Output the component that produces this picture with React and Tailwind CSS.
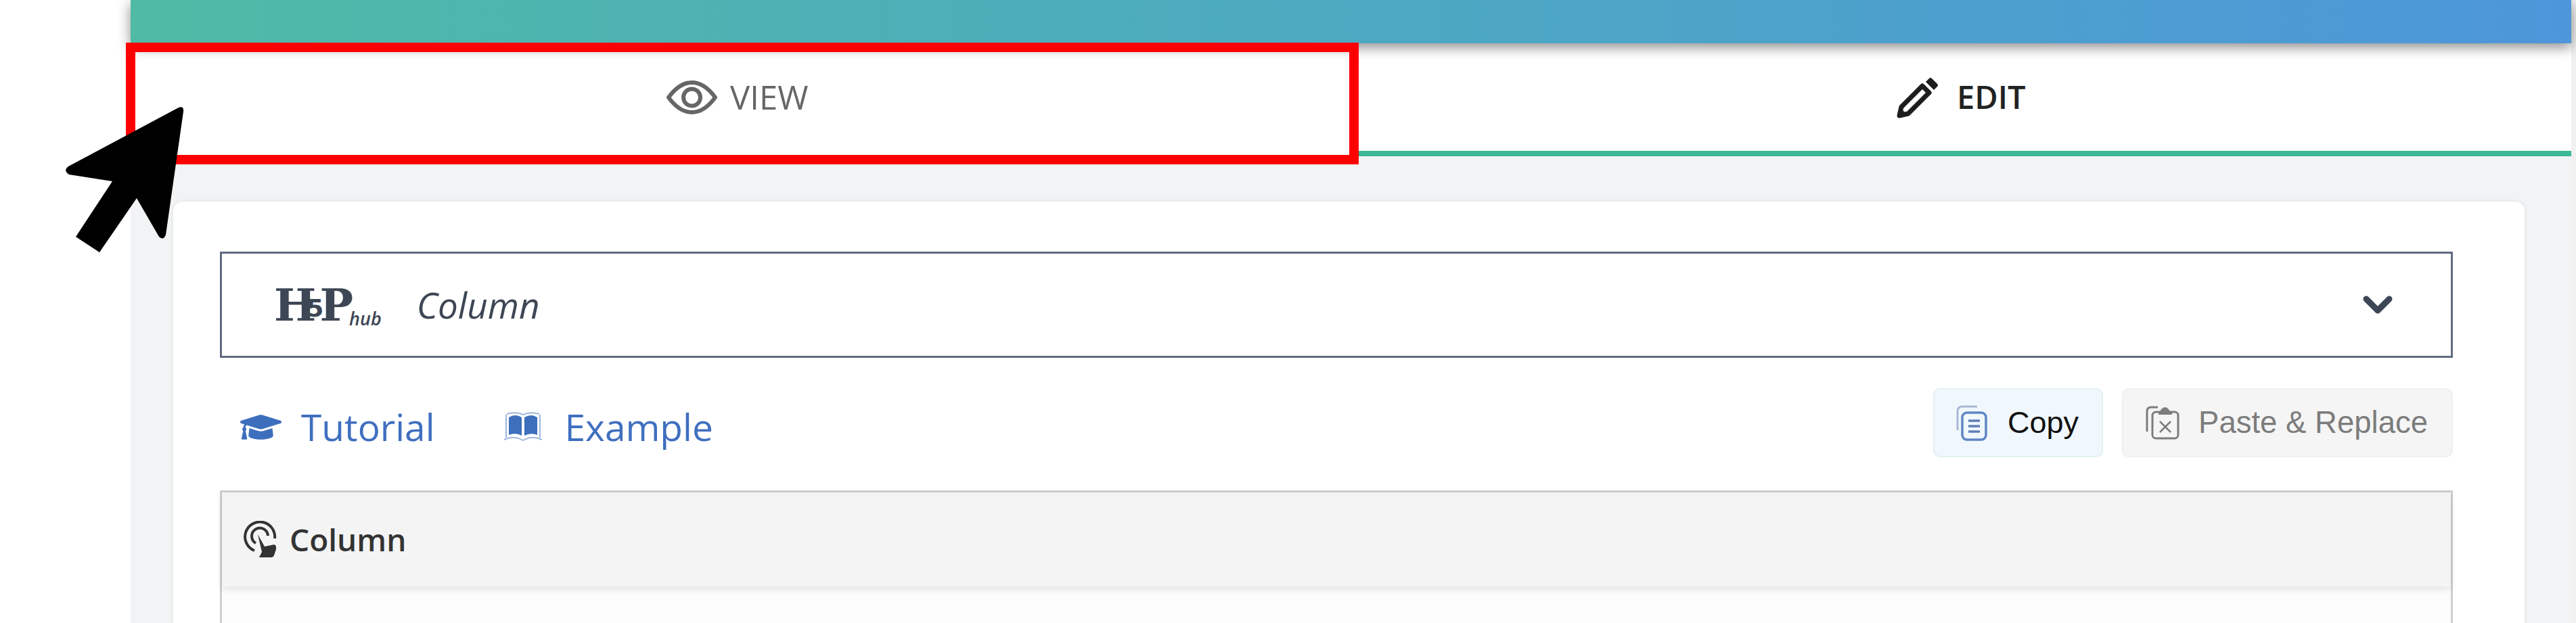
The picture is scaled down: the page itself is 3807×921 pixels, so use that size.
import { FaGraduationCap } from "react-icons/fa";

const EyeIcon = () => (
  <svg width="75" height="50" viewBox="0 0 75 50" fill="none" stroke="#666" strokeWidth="6">
    <path d="M3 25 C 14 10, 25 3, 37.5 3 C 50 3, 61 10, 72 25 C 61 40, 50 47, 37.5 47 C 25 47, 14 40, 3 25 Z" strokeLinejoin="round" />
    <circle cx="37.5" cy="25" r="12.5" />
  </svg>
);

const PencilIcon = () => (
  <svg width="62" height="62" viewBox="0 0 62 62" fill="none">
    <path d="M4 58 L7 45 L38 14 L48 24 L17 55 Z" stroke="#1d1d1d" strokeWidth="7" strokeLinejoin="round" fill="#fff" />
    <path d="M2 60 L5 46 L16 57 Z" fill="#1d1d1d" />
    <path d="M43 8 L48 3 Q50 1 52 3 L60 11 Q62 13 60 15 L55 20 Z" fill="#1d1d1d" />
  </svg>
);

const BookIcon = () => (
  <svg width="60" height="44" viewBox="0 0 60 44" fill="none">
    <path d="M9 8 Q18 2 28 8 V35 Q18 30 9 34 Z" fill="#3d6fbd" />
    <path d="M51 8 Q42 2 32 8 V35 Q42 30 51 34 Z" fill="#3d6fbd" />
    <path d="M5 4 V38 M55 4 V38 M2 41 Q16 34 30 42 Q44 34 58 41 M6 3 Q18 -1 30 4 Q42 -1 54 3" stroke="#9fb6dc" strokeWidth="2" />
  </svg>
);

const CopyIcon = () => (
  <svg width="47" height="54" viewBox="0 0 47 54" fill="none">
    <path d="M3 38 V10 Q3 3 10 3 H32" stroke="#a9b7d6" strokeWidth="3" />
    <rect x="10" y="12" width="35" height="40" rx="7" fill="#f0f8fd" stroke="#5f86c4" strokeWidth="3.5" />
    <path d="M19 24 H36 M19 32 H36 M19 40 H36" stroke="#5f7fb8" strokeWidth="3.5" />
  </svg>
);

const ClipboardIcon = () => (
  <svg width="50" height="50" viewBox="0 0 50 50" fill="none" stroke="#7c7c7c">
    <path d="M2 38 V8 Q2 2 8 2 H18" strokeWidth="3" />
    <rect x="10" y="9" width="38" height="39" rx="5" strokeWidth="3" />
    <path d="M19 13 V9 Q22 8 23 5 Q29 -1 34 5 Q35 8 39 9 V13 Z" fill="#7c7c7c" stroke="none" />
    <path d="M21 23 L37 39 M37 23 L21 39" strokeWidth="2.5" />
  </svg>
);

const TouchIcon = () => (
  <svg width="51" height="55" viewBox="0 0 51 55" fill="none" stroke="#333">
    <path d="M17 44 A 22 22 0 1 1 47 26" strokeWidth="4" />
    <path d="M19 33 A 12 12 0 1 1 37 22" strokeWidth="4" />
    <path d="M22 20 L32 38 L46 35 Q50 36 49 42 L46 51 Q45 54 41 54 H24 L28 46 Z" fill="#333" stroke="none" />
  </svg>
);

const CursorArrow = () => (
  <svg className="absolute left-[90px] top-[150px] z-30" width="190" height="230" viewBox="90 150 190 230">
    <path
      d="M264 159 Q272 156 271 165 L245 347 Q242 356 235 350 L202 293 L147 373 L112 350 L166 268 L102 258 Q93 252 101 246 Z"
      fill="#000"
    />
  </svg>
);

export default function App() {
  return (
    <div className="relative flex h-[921px] w-full overflow-hidden bg-white pl-[193px] font-['Open_Sans',sans-serif]">
      <div className="flex w-[3607px] shrink-0 flex-col bg-[#f1f3f5]">
        {/* Top bar */}
        <div className="relative z-10 h-[64px] shrink-0 bg-gradient-to-r from-[#50baa5] to-[#4d96da] shadow-[0_6px_18px_rgba(0,0,0,0.45)]"></div>

        {/* Tabs */}
        <div className="grid h-[167px] shrink-0 grid-cols-2 bg-white">
          <div className="flex items-center justify-center gap-[19px] pr-[10px] pb-[8px] text-[49px] text-[#666]">
            <EyeIcon />
            <span>VIEW</span>
          </div>
          <div className="flex items-center justify-center gap-[27px] border-b-[8px] border-[#3ab795] text-[47px] font-semibold text-[#222]">
            <PencilIcon />
            <span>EDIT</span>
          </div>
        </div>

        {/* Card */}
        <div className="mt-[67px] mr-[69px] ml-[63px] h-[800px] shrink-0 rounded-[14px] bg-white pt-[74px] pr-[106px] pl-[69px] shadow-[0_0_6px_rgba(0,0,0,0.08)]">
          <div className="flex h-[157px] items-center justify-between border-[3px] border-[#5f6b80] pr-[85px] pl-[77px] text-[#3d4654]">
            <div className="flex items-center gap-[52px]">
              <div className="flex items-end leading-none">
                <span className="font-['DejaVu_Serif',serif] text-[66px] font-bold tracking-[-14px]">H</span>
                <span className="relative top-[-10px] font-['DejaVu_Sans',sans-serif] text-[36px] font-bold tracking-[-6px]">5</span>
                <span className="font-['DejaVu_Serif',serif] text-[66px] font-bold tracking-[-6px]">P</span>
                <span className="text-[27px] font-semibold italic">hub</span>
              </div>
              <span className="text-[53px] italic">Column</span>
            </div>
            <svg width="46" height="30" viewBox="0 0 46 30" fill="none" stroke="#3d4654" strokeWidth="9" strokeLinecap="round" strokeLinejoin="round">
              <path d="M6 6 L23 23 L40 6" />
            </svg>
          </div>

          {/* Links and buttons */}
          <div className="mt-[45px] flex h-[102px] items-center justify-between">
            <div className="flex items-center pt-[12px] pl-[30px] text-[55px] text-[#3f6fbf]">
              <FaGraduationCap size={61} color="#3d6fbd" />
              <span className="ml-[29px]">Tutorial</span>
              <span className="ml-[100px]"><BookIcon /></span>
              <span className="ml-[32px]">Example</span>
            </div>
            <div className="flex h-full gap-[28px] font-['Liberation_Sans',Arial,sans-serif] text-[45px]">
              <div className="flex items-center gap-[30px] rounded-[10px] border-[2px] border-[#e2f0f2] bg-[#f0f8fd] pr-[34px] pl-[31px] text-[#111]">
                <CopyIcon />
                <span>Copy</span>
              </div>
              <div className="flex items-center gap-[28px] rounded-[10px] border-[2px] border-[#efefef] bg-[#f5f5f5] pr-[35px] pl-[33px] text-[45.5px] text-[#7c7c7c]">
                <ClipboardIcon />
                <span>Paste &amp; Replace</span>
              </div>
            </div>
          </div>

          {/* Panel */}
          <div className="mt-[49px] h-[400px] border-[3px] border-[#cfcfcf] bg-[#fcfcfc]">
            <div className="flex h-[139px] items-center gap-[18px] bg-[#f4f4f4] pl-[31px] text-[46px] font-semibold text-[#333] shadow-[0_4px_10px_rgba(0,0,0,0.1)]">
              <TouchIcon />
              <span>Column</span>
            </div>
          </div>
        </div>
      </div>
      <div className="w-[7px] shrink-0 bg-[#f1f1f1]"></div>

      {/* Tutorial annotation */}
      <div className="absolute top-[63px] left-[186px] z-20 h-[180px] w-[1822px] border-[14px] border-[#ff0000]"></div>
      <CursorArrow />
    </div>
  );
}
